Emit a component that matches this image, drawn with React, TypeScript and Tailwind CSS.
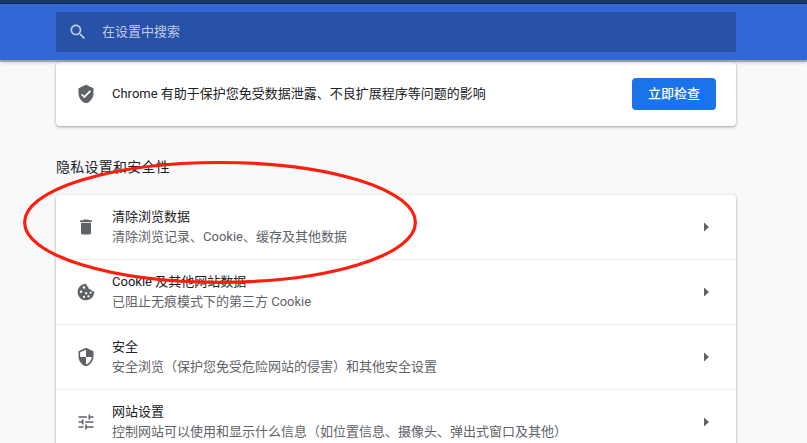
import React from "react";

const SHIELD = "M12 1L3 5v6c0 5.55 3.84 10.74 9 12 5.16-1.26 9-6.45 9-12V5l-9-4z";

function Icon({ children }: { children: React.ReactNode }) {
  return (
    <svg viewBox="0 0 24 24" className="h-5 w-5 shrink-0 fill-[#5f6368]">
      {children}
    </svg>
  );
}

const TrashIcon = (
  <Icon>
    <path d="M6 19c0 1.1.9 2 2 2h8c1.1 0 2-.9 2-2V7H6v12zM19 4h-3.5l-1-1h-5l-1 1H5v2h14V4z" />
  </Icon>
);

const CookieIcon = (
  <Icon>
    <path
      fillRule="evenodd"
      d="M21.95 11.2c-1.8.55-3.55-.5-3.75-2.2-2.3.3-3.9-1.3-3.4-3.3-1.9-.4-2.8-2-2.2-3.6C6.8 1.7 2 6.3 2 12c0 5.52 4.48 10 10 10s10.2-4.6 9.95-10.8zM9.5 5.2a1.5 1.5 0 1 1 0 3 1.5 1.5 0 0 1 0-3zM6 10.2a1.5 1.5 0 1 1 0 3 1.5 1.5 0 0 1 0-3zm6.2 1.8a1.4 1.4 0 1 1 0 2.8 1.4 1.4 0 0 1 0-2.8zm5.3-.4a1.3 1.3 0 1 1 0 2.6 1.3 1.3 0 0 1 0-2.6zM9.6 16.6a1.3 1.3 0 1 1 0 2.6 1.3 1.3 0 0 1 0-2.6zm5.4-.6a1.3 1.3 0 1 1 0 2.6 1.3 1.3 0 0 1 0-2.6z"
    />
  </Icon>
);

const SecurityIcon = (
  <Icon>
    <path d="M12 1L3 5v6c0 5.55 3.84 10.74 9 12 5.16-1.26 9-6.45 9-12V5l-9-4zm0 10.99h7c-.53 4.12-3.28 7.79-7 8.94V12H5V6.3l7-3.11v8.8z" />
  </Icon>
);

const TuneIcon = (
  <Icon>
    <path d="M3 17v2h6v-2H3zM3 5v2h10V5H3zm10 16v-2h8v-2h-8v-2h-2v6h2zM7 9v2H3v2h4v2h2V9H7zm14 4v-2H11v2h10zm-6-4h2V7h4V5h-4V3h-2v6z" />
  </Icon>
);

const rows = [
  { icon: TrashIcon, title: "清除浏览数据", detail: "清除浏览记录、Cookie、缓存及其他数据" },
  { icon: CookieIcon, title: "Cookie 及其他网站数据", detail: "已阻止无痕模式下的第三方 Cookie" },
  { icon: SecurityIcon, title: "安全", detail: "安全浏览（保护您免受危险网站的侵害）和其他安全设置" },
  { icon: TuneIcon, title: "网站设置", detail: "控制网站可以使用和显示什么信息（如位置信息、摄像头、弹出式窗口及其他）" },
];

const CARD = "rounded bg-white shadow-[0_1px_2px_0_rgba(60,64,67,0.3),0_1px_3px_1px_rgba(60,64,67,0.15)]";

export default function App() {
  return (
    <div className="relative h-[443px] w-full overflow-hidden bg-[#f8f9fa] font-[Roboto,'Noto_Sans_CJK_SC',sans-serif] text-[13px] leading-5 text-[#202124]">
      <header className="relative z-10 bg-[#3367d6] pb-2 shadow-[0_2px_0_0_rgba(0,0,0,0.24),0_3px_3px_0_rgba(0,0,0,0.16)]">
        <div className="mb-2 h-1 border-b border-[#10294f] bg-[#1b375f]" />
        <div className="ml-14 flex h-10 w-[680px] items-center rounded-[2px] bg-[#2851a8] pl-3 text-[#bfcbe5]">
          <svg viewBox="0 0 24 24" className="h-5 w-5 fill-current">
            <path d="M15.5 14h-.79l-.28-.27C15.41 12.59 16 11.11 16 9.5 16 5.91 13.09 3 9.5 3S3 5.91 3 9.5 5.91 16 9.5 16c1.61 0 3.09-.59 4.23-1.57l.27.28v.79l5 4.99L20.49 19l-4.99-5zm-6 0C7.01 14 5 11.99 5 9.5S7.01 5 9.5 5 14 7.01 14 9.5 11.99 14 9.5 14z" />
          </svg>
          <span className="mb-px ml-3.5">在设置中搜索</span>
        </div>
      </header>
      <main className="ml-14 w-[680px] pt-0.5">
        <section className={`${CARD} flex h-16 items-center px-5`}>
          <Icon>
            <path d={SHIELD} />
            <path d="M10 17l-4-4 1.41-1.41L10 14.17l6.59-6.59L18 9l-8 8z" className="fill-white" />
          </Icon>
          <span className="ml-4 flex-1">Chrome 有助于保护您免受数据泄露、不良扩展程序等问题的影响</span>
          <button className="h-8 w-[84px] rounded bg-[#1a73e8] pb-px font-medium text-white">立即检查</button>
        </section>
        <h2 className="mt-[31px] h-[38px] text-sm tracking-[0.25px]">隐私设置和安全性</h2>
        <section className={CARD}>
          {rows.map((row, i) => (
            <div
              key={row.title}
              className={i ? "flex h-[65px] items-center border-t border-[#ececed] px-5" : "flex h-16 items-center px-5"}
            >
              {row.icon}
              <div className="mb-px ml-4 flex-1">
                <div>{row.title}</div>
                <div className="text-[#5f6368]">{row.detail}</div>
              </div>
              <svg viewBox="0 0 20 20" className="h-5 w-5 fill-[#5f6368]">
                <path d="M8 5.5l5 4.5L8 14.5z" />
              </svg>
            </div>
          ))}
        </section>
      </main>
      <svg viewBox="0 0 807 443" className="pointer-events-none absolute left-0 top-0 h-[443px] w-[807px]">
        <ellipse cx="220" cy="222.4" rx="195.4" ry="59.9" fill="none" stroke="#ff1d0c" strokeWidth="3.2" />
      </svg>
    </div>
  );
}
